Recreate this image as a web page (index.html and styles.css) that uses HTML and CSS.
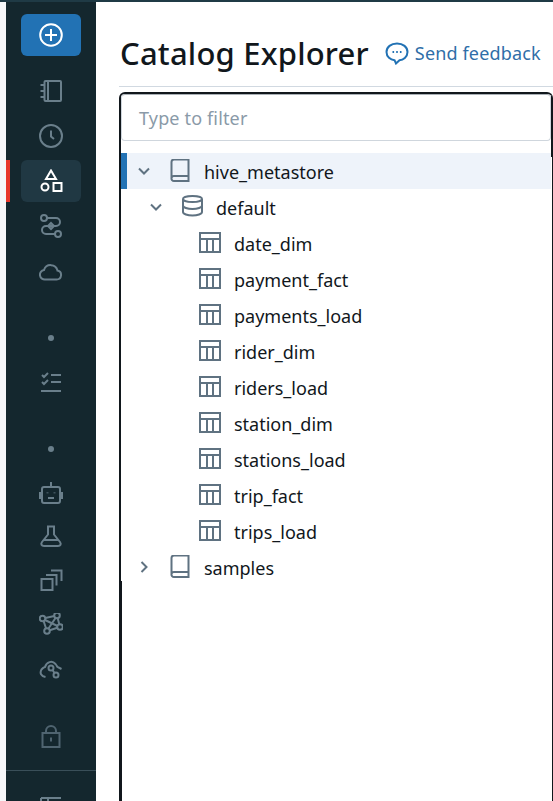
FILE: index.html
```html
<!DOCTYPE html>
<html lang="en">
<head>
  <meta charset="UTF-8">
  <title>Catalog Explorer</title>
  <link rel="stylesheet" href="styles.css">
</head>
<body>

<div class="app">
  <nav class="sidebar">
    <div class="nav-group first">
      <a class="nav-item new">
        <svg viewBox="0 0 24 24"><circle cx="12" cy="12" r="10.8"/><path d="M12 6v12M6 12h12"/></svg>
      </a>
    </div>

    <div class="nav-group top-gap">
      <a class="nav-item">
        <svg viewBox="0 0 24 24"><rect x="5.5" y="2" width="16.5" height="20" rx="1"/><path d="M9 2v20M1.500 6h4M1.500 12h4M1.500 18h4"/></svg>
      </a>
      <a class="nav-item">
        <svg viewBox="0 0 24 24"><circle cx="12" cy="12" r="11"/><path d="M12 6.5v6l3 2.500"/></svg>
      </a>
      <a class="nav-item active">
        <svg viewBox="0 0 24 24"><path d="M12 1.500l5 8.500H7z"/><circle cx="6" cy="18" r="3.500"/><rect x="14.500" y="14" width="8" height="8"/></svg>
      </a>
      <a class="nav-item">
        <svg viewBox="0 0 24 24"><circle cx="5" cy="4" r="3"/><circle cx="19" cy="20" r="3"/><path d="M8 4h9a4 4 0 0 1 0 8H7a4 4 0 0 0 0 8h9M12 9l3 3-3 3-3-3z"/></svg>
      </a>
      <a class="nav-item">
        <svg viewBox="0 0 24 24"><path d="M6.500 20.500h11a4.500 4.500 0 0 0 1-8.900 7 7 0 0 0-13.500-.6 4.800 4.800 0 0 0 1.500 9.500z"/></svg>
      </a>
    </div>

    <div class="nav-group dot-gap">
      <div class="nav-item"><span class="dot"></span></div>
      <a class="nav-item">
        <svg viewBox="0 0 24 24"><path d="M12 5h10M12 12h10M2 21h20M3 5l2 2 4-4M3 12l2 2 4-4"/></svg>
      </a>
    </div>

    <div class="nav-group dot-gap">
      <div class="nav-item"><span class="dot"></span></div>
      <a class="nav-item">
        <svg viewBox="0 0 24 24"><path d="M12 1v5"/><rect x="3" y="6" width="18" height="16" rx="2"/><path d="M1 11v7M23 11v7M9 17h6M8.500 11.500v.8M15.500 11.500v.8"/></svg>
      </a>
      <a class="nav-item">
        <svg viewBox="0 0 24 24"><path d="M9 1.500v8L3 17c-1.500 2-.5 4 2 4h14c2.500 0 3.500-2 2-4l-6-7.500v-8zM5.500 15h13"/></svg>
      </a>
      <a class="nav-item">
        <svg viewBox="0 0 24 24"><rect x="2.500" y="10" width="11" height="11"/><path d="M7 6h10.500v10.500M12 1.500h10.500V12"/></svg>
      </a>
      <a class="nav-item">
        <svg viewBox="0 0 24 24"><circle cx="3.500" cy="5.500" r="2.800"/><circle cx="18" cy="2.500" r="2.800"/><circle cx="21" cy="14" r="2.800"/><circle cx="8" cy="18" r="2.800"/><path d="M6.300 5l9-2M6 7l12.500 6M18.700 5.300l1.600 6M18.300 14.800l-7.600 2.400M4.600 8l2.400 7.300M16.500 5L9.500 15.500"/></svg>
      </a>
      <a class="nav-item">
        <svg viewBox="0 0 24 24"><path d="M6.500 20C2 19 .5 16 2.500 12.500 4 10.800 5 10.500 6 10 7.500 5 13 3 16.500 7c1.200 1.500 1.500 2.500 2 3l4 2"/><circle cx="12" cy="11" r="2.500"/><circle cx="17" cy="18" r="2.500"/><path d="M13.500 13l2 3"/></svg>
      </a>
    </div>

    <div class="nav-group lock-gap">
      <div class="nav-item locked">
        <svg viewBox="0 0 24 24"><rect x="3.500" y="8" width="17" height="14"/><path d="M7 8V6a5 5 0 0 1 10 0v2M12 12.500v4"/></svg>
      </div>
    </div>

    <div class="nav-bottom">
      <svg viewBox="0 0 24 24"><path d="M2 2h20M2 2v20M9 2v20"/></svg>
    </div>
  </nav>

  <main class="main">
    <header class="page-header">
      <h1>Catalog Explorer</h1>
      <a class="feedback">
        <svg viewBox="0 0 24 24"><path d="M12 2.500c6 0 10.500 3.500 10.500 8.500s-4.500 8-8 8.300L11 22.500l-1.500-3.300C5.500 18.800 1.500 16 1.500 11S6 2.500 12 2.500z"/><path d="M7.500 11h1.600M11.200 11h1.600M14.900 11h1.600"/></svg>
        Send feedback
      </a>
    </header>

    <section class="panel">
      <div class="filter">Type to filter</div>
      <ul class="tree">
        <li class="row selected level-0">
          <svg class="chevron" viewBox="0 0 24 24"><path d="M7 9.500l5 5 5-5"/></svg>
          <svg class="icon" viewBox="0 0 24 24"><path d="M3.500 19v-16a2.500 2.500 0 0 1 2.500-2.500h14.500v21.500H6a2.500 2.500 0 0 1-2.500-3zM3.500 19a2.500 2.500 0 0 1 2.500-2h14.500"/></svg>
          <span>hive_metastore</span>
        </li>
        <li class="row level-1">
          <svg class="chevron" viewBox="0 0 24 24"><path d="M7 9.500l5 5 5-5"/></svg>
          <svg class="icon" viewBox="0 0 24 24"><ellipse cx="12.500" cy="4" rx="9.500" ry="3"/><path d="M3 4v13c0 2 4.500 3.500 9.500 3.500s9.500-1.500 9.500-3.500V4M3 10.500c0 2 4.500 3.500 9.500 3.500s9.500-1.500 9.500-3.500"/></svg>
          <span>default</span>
        </li>
        <li class="row level-2"><svg class="icon" viewBox="0 0 24 24"><use href="#table"/></svg><span>date_dim</span></li>
        <li class="row level-2"><svg class="icon" viewBox="0 0 24 24"><use href="#table"/></svg><span>payment_fact</span></li>
        <li class="row level-2"><svg class="icon" viewBox="0 0 24 24"><use href="#table"/></svg><span>payments_load</span></li>
        <li class="row level-2"><svg class="icon" viewBox="0 0 24 24"><use href="#table"/></svg><span>rider_dim</span></li>
        <li class="row level-2"><svg class="icon" viewBox="0 0 24 24"><use href="#table"/></svg><span>riders_load</span></li>
        <li class="row level-2"><svg class="icon" viewBox="0 0 24 24"><use href="#table"/></svg><span>station_dim</span></li>
        <li class="row level-2"><svg class="icon" viewBox="0 0 24 24"><use href="#table"/></svg><span>stations_load</span></li>
        <li class="row level-2"><svg class="icon" viewBox="0 0 24 24"><use href="#table"/></svg><span>trip_fact</span></li>
        <li class="row level-2"><svg class="icon" viewBox="0 0 24 24"><use href="#table"/></svg><span>trips_load</span></li>
        <li class="row level-0">
          <svg class="chevron" viewBox="0 0 24 24"><path d="M9.500 7l5 5-5 5"/></svg>
          <svg class="icon" viewBox="0 0 24 24"><path d="M3.500 19v-16a2.500 2.500 0 0 1 2.500-2.500h14.500v21.500H6a2.500 2.500 0 0 1-2.500-3zM3.500 19a2.500 2.500 0 0 1 2.500-2h14.500"/></svg>
          <span>samples</span>
        </li>
      </ul>
      <div class="edge"></div>
    </section>
  </main>
</div>

<svg class="defs" width="0" height="0">
  <symbol id="table" viewBox="0 0 24 24">
    <path d="M2 2h20v19H2zM2 8h20M9 8v13M15 8v13" fill="none" stroke="currentColor" stroke-width="2"/>
  </symbol>
</svg>

</body>
</html>
```

FILE: styles.css
```css
* {
  margin: 0;
  padding: 0;
  box-sizing: border-box;
}

html, body {
  height: 100%;
  overflow: hidden;
  background: #fff;
  font-family: "Noto Sans", "Open Sans", sans-serif;
}

.app {
  display: flex;
  height: 100%;
  padding-left: 6px;
  background: #f6f7f9;
  border-top: 2px solid #1f3a45;
}

/* left nav */

.sidebar {
  position: relative;
  flex: 0 0 90px;
  display: flex;
  flex-direction: column;
  align-items: center;
  background: #14272e;
  overflow: hidden;
}

.nav-group {
  display: flex;
  flex-direction: column;
  gap: 2px;
}

.first { margin-top: 12px; }
.top-gap { margin-top: 14px; gap: 3px; }
.dot-gap { margin-top: 25px; }
.lock-gap { margin-top: 26px; }

.nav-item {
  width: 60px;
  height: 42px;
  display: flex;
  align-items: center;
  justify-content: center;
  border-radius: 6px;
  color: #6a7f8b;
}

.nav-item svg {
  width: 24px;
  height: 24px;
  fill: none;
  stroke: currentColor;
  stroke-width: 2;
}

.nav-item.new {
  background: #2272b4;
  color: #fff;
}

.nav-item.active {
  background: #203843;
  color: #fff;
}

.nav-item.active::before {
  content: "";
  position: absolute;
  left: 0;
  width: 4px;
  height: 42px;
  background: #e8362a;
}

.nav-item.locked {
  color: #4f6470;
}

.dot {
  width: 6px;
  height: 6px;
  border-radius: 50%;
  background: #6a7f8b;
}

.nav-bottom {
  flex: none;
  margin-top: 12px;
  width: 100%;
  height: 60px;
  padding-top: 25px;
  text-align: center;
  border-top: 1px solid #3a4f59;
  color: #6a7f8b;
}

.nav-bottom svg {
  width: 24px;
  height: 24px;
  fill: none;
  stroke: currentColor;
  stroke-width: 2;
}

/* main area */

.main {
  flex: 1;
  min-width: 0;
  background: #fff;
  padding-left: 23px;
  overflow: hidden;
}

.page-header {
  display: flex;
  align-items: center;
  gap: 16px;
  height: 85px;
  padding: 17px 0 0 1px;
  border-bottom: 1px solid #d1d9e1;
}

h1 {
  font-size: 31px;
  font-weight: 500;
  letter-spacing: .2px;
  color: #11171c;
  white-space: nowrap;
}

.feedback {
  display: flex;
  align-items: center;
  gap: 6px;
  font-size: 18px;
  letter-spacing: .15px;
  color: #2f6ea8;
  white-space: nowrap;
}

.feedback svg {
  width: 24px;
  height: 24px;
  fill: none;
  stroke: #2272b4;
  stroke-width: 2;
}

.panel {
  position: relative;
  margin-top: 5px;
  height: 720px;
  border: 2px solid #11171c;
  border-right-width: 1px;
  border-bottom: 0;
  border-radius: 6px 6px 0 0;
}

.panel::after {
  content: "";
  position: absolute;
  top: 2px;
  right: 0;
  width: 1px;
  height: 61px;
  background: #11171c;
}

.filter {
  height: 47px;
  margin-right: 1px;
  padding-left: 17px;
  display: flex;
  align-items: center;
  font-size: 18px;
  letter-spacing: .15px;
  color: #8a9aa8;
  border: 1px solid #cfd6dd;
  border-top-color: #a9b0b6;
  border-radius: 4px;
}

.tree {
  list-style: none;
  padding-top: 12px;
  margin-right: 1px;
}

.row {
  display: flex;
  align-items: center;
  height: 36px;
  font-size: 18px;
  color: #11171c;
}

.row span {
  padding-top: 2px;
}

.row.selected {
  background: #eef3fa;
  box-shadow: inset 6px 0 0 #2272b4;
}

.level-0 { padding-left: 11px; }
.level-1 { padding-left: 23px; }
.level-2 { padding-left: 77px; }

.chevron {
  width: 24px;
  height: 24px;
  margin-right: 12px;
  fill: none;
  stroke: #5f7281;
  stroke-width: 2;
}

.icon {
  width: 24px;
  height: 24px;
  margin-right: 12px;
  fill: none;
  stroke: #5f7281;
  stroke-width: 2;
  color: #5f7281;
}

.edge {
  position: absolute;
  left: -2px;
  top: 487px;
  width: 3px;
  height: 233px;
  background: #11171c;
}

.defs {
  position: absolute;
}
```
